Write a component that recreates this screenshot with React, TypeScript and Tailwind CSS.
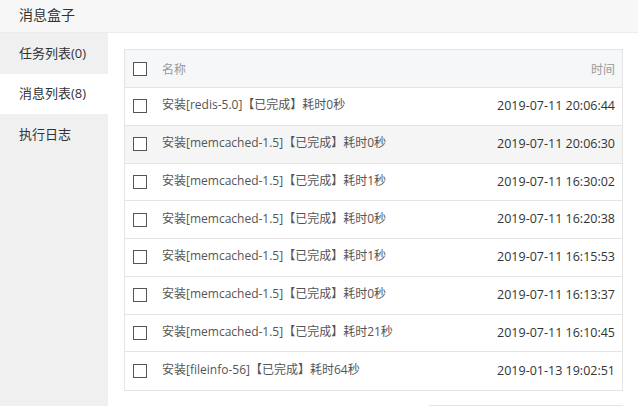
import React from "react"

const rows = [
    { name: "安装[redis-5.0]【已完成】耗时0秒", time: "2019-07-11 20:06:44" },
    { name: "安装[memcached-1.5]【已完成】耗时0秒", time: "2019-07-11 20:06:30", hover: true },
    { name: "安装[memcached-1.5]【已完成】耗时1秒", time: "2019-07-11 16:30:02" },
    { name: "安装[memcached-1.5]【已完成】耗时0秒", time: "2019-07-11 16:20:38" },
    { name: "安装[memcached-1.5]【已完成】耗时1秒", time: "2019-07-11 16:15:53" },
    { name: "安装[memcached-1.5]【已完成】耗时0秒", time: "2019-07-11 16:13:37" },
    { name: "安装[memcached-1.5]【已完成】耗时21秒", time: "2019-07-11 16:10:45" },
    { name: "安装[fileinfo-56]【已完成】耗时64秒", time: "2019-01-13 19:02:51" },
]

const tabs = [
    { label: "任务列表(0)" },
    { label: "消息列表(8)", active: true },
    { label: "执行日志" },
]

function Checkbox() {
    return <span className="block w-[14px] h-[14px] border border-[#555] bg-white shrink-0" />
}

export default function App() {
    return (
        <div
            className="w-[638px] h-[406px] overflow-hidden bg-white flex flex-col text-[#333]"
            style={{ fontFamily: '"Open Sans", "Noto Sans CJK SC", sans-serif' }}
        >
            {/* Title bar */}
            <div className="h-[33px] shrink-0 bg-[#f7f7f7] border-b border-[#ececec] flex items-center pl-[19px] pb-[4px] text-[14px]">
                消息盒子
            </div>

            <div className="flex flex-1 min-h-0">
                {/* Tabs */}
                <aside className="w-[108px] shrink-0 bg-[#f0f0f0] flex flex-col">
                    {tabs.map((t) => (
                        <div
                            key={t.label}
                            className={`h-[40.5px] flex items-center pl-[19px] text-[13px] ${
                                t.active ? "bg-white" : ""
                            }`}
                        >
                            {t.label}
                        </div>
                    ))}
                </aside>

                {/* Content */}
                <main className="flex-1 pt-[16px] pl-[16px] pr-[15px]">
                    <div className="border border-[#e4e4e4] text-[12px]">
                        <div className="h-[38px] bg-[#f6f7f9] border-b border-[#e4e4e4] flex items-center pl-[8px] pr-[7px] text-[#999]">
                            <Checkbox />
                            <span className="ml-[15px] flex-1 mt-[2px]">名称</span>
                            <span className="mt-[2px]">时间</span>
                        </div>
                        {rows.map((r, i) => (
                            <div
                                key={i}
                                className={`h-[37.75px] flex items-center pl-[8px] pr-[7px] text-[#555] ${
                                    i < rows.length - 1 ? "border-b border-[#e4e4e4]" : ""
                                } ${r.hover ? "bg-[#f5f5f5]" : ""}`}
                            >
                                <Checkbox />
                                <span className="ml-[15px] flex-1 -mt-[2px]">{r.name}</span>
                                <span className="text-[#333] text-[12.5px]">{r.time}</span>
                            </div>
                        ))}
                    </div>
                    <div className="mt-[14px] ml-[305px] border-t border-[#e4e4e4]" />
                </main>
            </div>
        </div>
    )
}
